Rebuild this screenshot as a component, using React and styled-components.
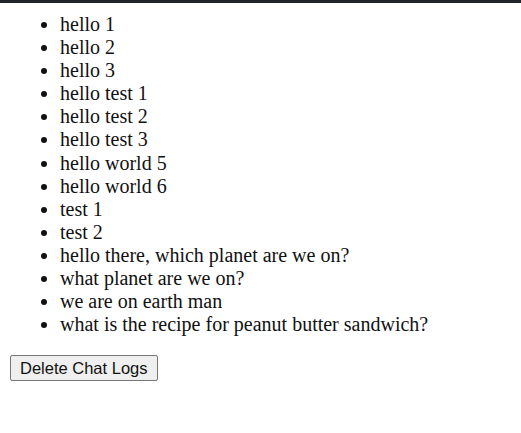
import React from 'react';
import styled, { createGlobalStyle } from 'styled-components';

const GlobalStyle = createGlobalStyle`
    body {
        margin: 0;
        background: #ffffff;
        font-family: 'Liberation Serif', 'Times New Roman', serif;
    }
`;

const messages = [
    'hello 1',
    'hello 2',
    'hello 3',
    'hello test 1',
    'hello test 2',
    'hello test 3',
    'hello world 5',
    'hello world 6',
    'test 1',
    'test 2',
    'hello there, which planet are we on?',
    'what planet are we on?',
    'we are on earth man',
    'what is the recipe for peanut butter sandwich?',
];

const App = () => {
    return (
        <>
            <GlobalStyle />
            <TopBar />
            <Page>
                <ChatList>
                    {messages.map((m, i) => (
                        <ChatItem key={i}>{m}</ChatItem>
                    ))}
                </ChatList>
                <DeleteButton>Delete Chat Logs</DeleteButton>
            </Page>
        </>
    );
};

export default App;

const TopBar = styled.div`
    height: 3px;
    background-color: #212529;
`;

const Page = styled.div`
    padding: 0 10px;
`;

const ChatList = styled.ul`
    margin: 10px 0 19px;
    padding-left: 50px;
    font-size: 20px;
    line-height: 23.1px;
    color: #111;
`;

const ChatItem = styled.li``;

const DeleteButton = styled.button`
    font-family: 'Liberation Sans', Arial, sans-serif;
    font-size: 16.5px;
    height: 26px;
    padding: 1px 9px;
    color: #111;
    background-color: #efefef;
    border: 1px solid #767676;
    border-radius: 2px;
`;
